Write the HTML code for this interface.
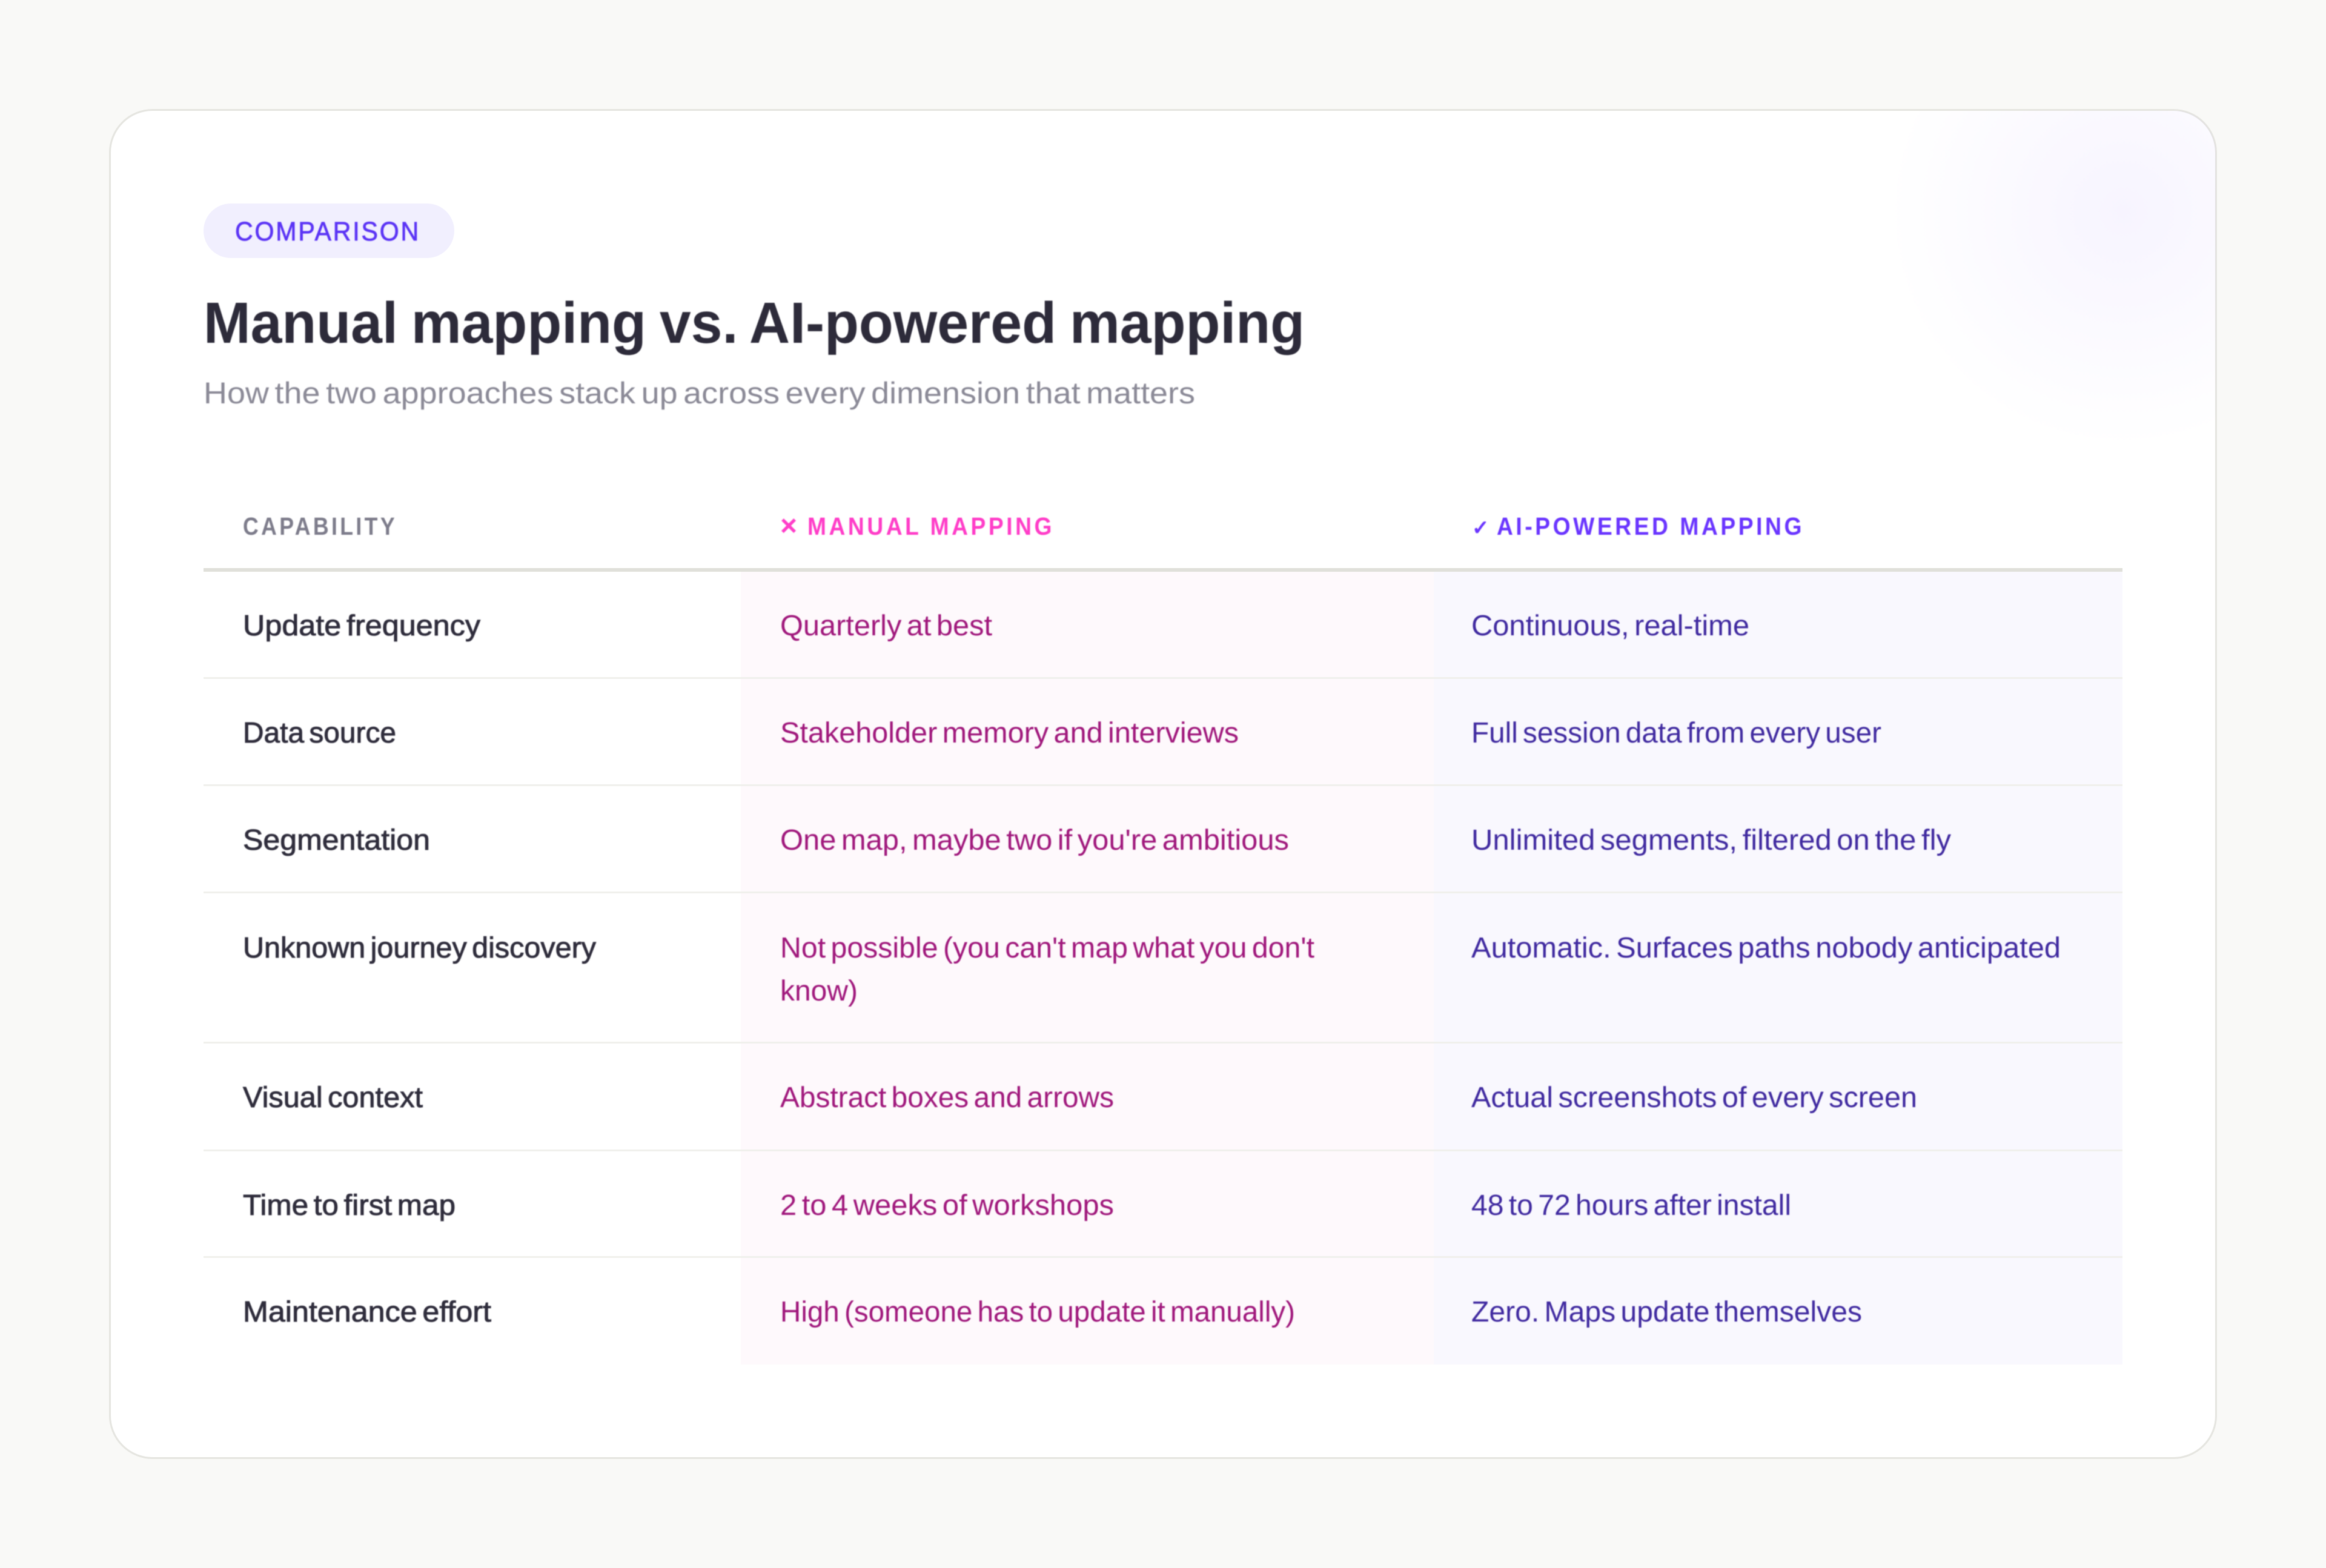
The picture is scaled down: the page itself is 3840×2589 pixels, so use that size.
<!DOCTYPE html>
<html lang="en">
<head>
<meta charset="utf-8">
<title>Comparison</title>
<style>
html,body{margin:0;padding:0;width:3840px;height:2589px;overflow:hidden;background:#f9f9f7}
svg{display:block;position:absolute;left:0;top:0}
text{font-family:"Liberation Sans",sans-serif;text-rendering:geometricPrecision;white-space:pre}
.t{filter:blur(.8px)}
.lab{font-size:48px;fill:#2f2d3c;stroke:#2f2d3c;stroke-width:.9px;word-spacing:-5px}
.man{font-size:48px;fill:#a0187c;word-spacing:-5px}
.ai{font-size:48px;fill:#402aa0;word-spacing:-5px}
.hd{font-size:41px;font-weight:700;letter-spacing:5px}
</style>
</head>
<body>
<svg width="3840" height="2589" viewBox="0 0 3840 2589" xmlns="http://www.w3.org/2000/svg">
<defs>
<radialGradient id="glow" gradientUnits="userSpaceOnUse" cx="3505" cy="350" r="390">
<stop offset="0" stop-color="#6c3cff" stop-opacity=".055"/>
<stop offset="1" stop-color="#6c3cff" stop-opacity="0"/>
</radialGradient>
<clipPath id="cardclip"><rect x="181.5" y="181.5" width="3477" height="2226" rx="70.5"/></clipPath>
</defs>
<rect width="3840" height="2589" fill="#f9f9f7"/>
<rect x="181.5" y="181.5" width="3477" height="2226" rx="70.5" fill="#ffffff" stroke="#e5e5e0" stroke-width="3"/>
<rect x="3100" y="183" width="740" height="570" fill="url(#glow)" clip-path="url(#cardclip)"/>

<rect x="336" y="336" width="414" height="90" rx="45" fill="#f1effe"/>

<rect x="1223" y="944" width="1144" height="1309" fill="#fef9fc"/>
<rect x="2367" y="944" width="1137" height="1309" fill="#f9f8fe"/>

<rect x="336" y="938" width="3168" height="6" fill="#e0e0da"/>
<g fill="#f0f0ec">
<rect x="336" y="1118" width="3168" height="3"/>
<rect x="336" y="1295" width="3168" height="3"/>
<rect x="336" y="1472" width="3168" height="3"/>
<rect x="336" y="1720" width="3168" height="3"/>
<rect x="336" y="1898" width="3168" height="3"/>
<rect x="336" y="2074" width="3168" height="3"/>
</g>

<g class="t">
<text x="388" y="397" font-size="44" fill="#5b34f5" stroke="#5b34f5" stroke-width=".8" letter-spacing="3" textLength="306" lengthAdjust="spacingAndGlyphs">COMPARISON</text>
<text x="336" y="566" font-size="96" font-weight="700" fill="#2d2b3a" word-spacing="-4" textLength="1818" lengthAdjust="spacingAndGlyphs">Manual mapping vs. AI-powered mapping</text>
<text x="336" y="666" font-size="50" fill="#8b8a97" word-spacing="-5" textLength="1637" lengthAdjust="spacingAndGlyphs">How the two approaches stack up across every dimension that matters</text>

<text class="hd" x="401" y="883" fill="#7d7c8b" textLength="255" lengthAdjust="spacingAndGlyphs">CAPABILITY</text>
<text x="1288" y="884" font-size="48" font-weight="700" fill="#ff3dc8">×</text>
<text class="hd" x="1333" y="883" fill="#ff3dc8" textLength="408" lengthAdjust="spacingAndGlyphs">MANUAL MAPPING</text>
<text x="2430" y="883" font-size="34" font-weight="700" fill="#6a35ff" stroke="#6a35ff" stroke-width="1.2" style="font-family:'DejaVu Sans',sans-serif">✓</text>
<text class="hd" x="2471" y="883" fill="#6a35ff" textLength="508" lengthAdjust="spacingAndGlyphs">AI-POWERED MAPPING</text>

<text class="lab" x="401" y="1049" textLength="392" lengthAdjust="spacingAndGlyphs">Update frequency</text>
<text class="lab" x="401" y="1226" textLength="253" lengthAdjust="spacingAndGlyphs">Data source</text>
<text class="lab" x="401" y="1403" textLength="309" lengthAdjust="spacingAndGlyphs">Segmentation</text>
<text class="lab" x="401" y="1581" textLength="583" lengthAdjust="spacingAndGlyphs">Unknown journey discovery</text>
<text class="lab" x="401" y="1828" textLength="297" lengthAdjust="spacingAndGlyphs">Visual context</text>
<text class="lab" x="401" y="2006" textLength="351" lengthAdjust="spacingAndGlyphs">Time to first map</text>
<text class="lab" x="401" y="2182" textLength="410" lengthAdjust="spacingAndGlyphs">Maintenance effort</text>

<text class="man" x="1288" y="1049" textLength="350" lengthAdjust="spacingAndGlyphs">Quarterly at best</text>
<text class="man" x="1288" y="1226" textLength="757" lengthAdjust="spacingAndGlyphs">Stakeholder memory and interviews</text>
<text class="man" x="1288" y="1403" textLength="840" lengthAdjust="spacingAndGlyphs">One map, maybe two if you're ambitious</text>
<text class="man" x="1288" y="1581" textLength="882" lengthAdjust="spacingAndGlyphs">Not possible (you can't map what you don't</text>
<text class="man" x="1288" y="1652" textLength="128" lengthAdjust="spacingAndGlyphs">know)</text>
<text class="man" x="1288" y="1828" textLength="551" lengthAdjust="spacingAndGlyphs">Abstract boxes and arrows</text>
<text class="man" x="1288" y="2006" textLength="551" lengthAdjust="spacingAndGlyphs">2 to 4 weeks of workshops</text>
<text class="man" x="1288" y="2182" textLength="850" lengthAdjust="spacingAndGlyphs">High (someone has to update it manually)</text>

<text class="ai" x="2429" y="1049" textLength="459" lengthAdjust="spacingAndGlyphs">Continuous, real-time</text>
<text class="ai" x="2429" y="1226" textLength="677" lengthAdjust="spacingAndGlyphs">Full session data from every user</text>
<text class="ai" x="2429" y="1403" textLength="792" lengthAdjust="spacingAndGlyphs">Unlimited segments, filtered on the fly</text>
<text class="ai" x="2429" y="1581" textLength="973" lengthAdjust="spacingAndGlyphs">Automatic. Surfaces paths nobody anticipated</text>
<text class="ai" x="2429" y="1828" textLength="736" lengthAdjust="spacingAndGlyphs">Actual screenshots of every screen</text>
<text class="ai" x="2429" y="2006" textLength="528" lengthAdjust="spacingAndGlyphs">48 to 72 hours after install</text>
<text class="ai" x="2429" y="2182" textLength="645" lengthAdjust="spacingAndGlyphs">Zero. Maps update themselves</text>
</g>
</svg>
</body>
</html>
